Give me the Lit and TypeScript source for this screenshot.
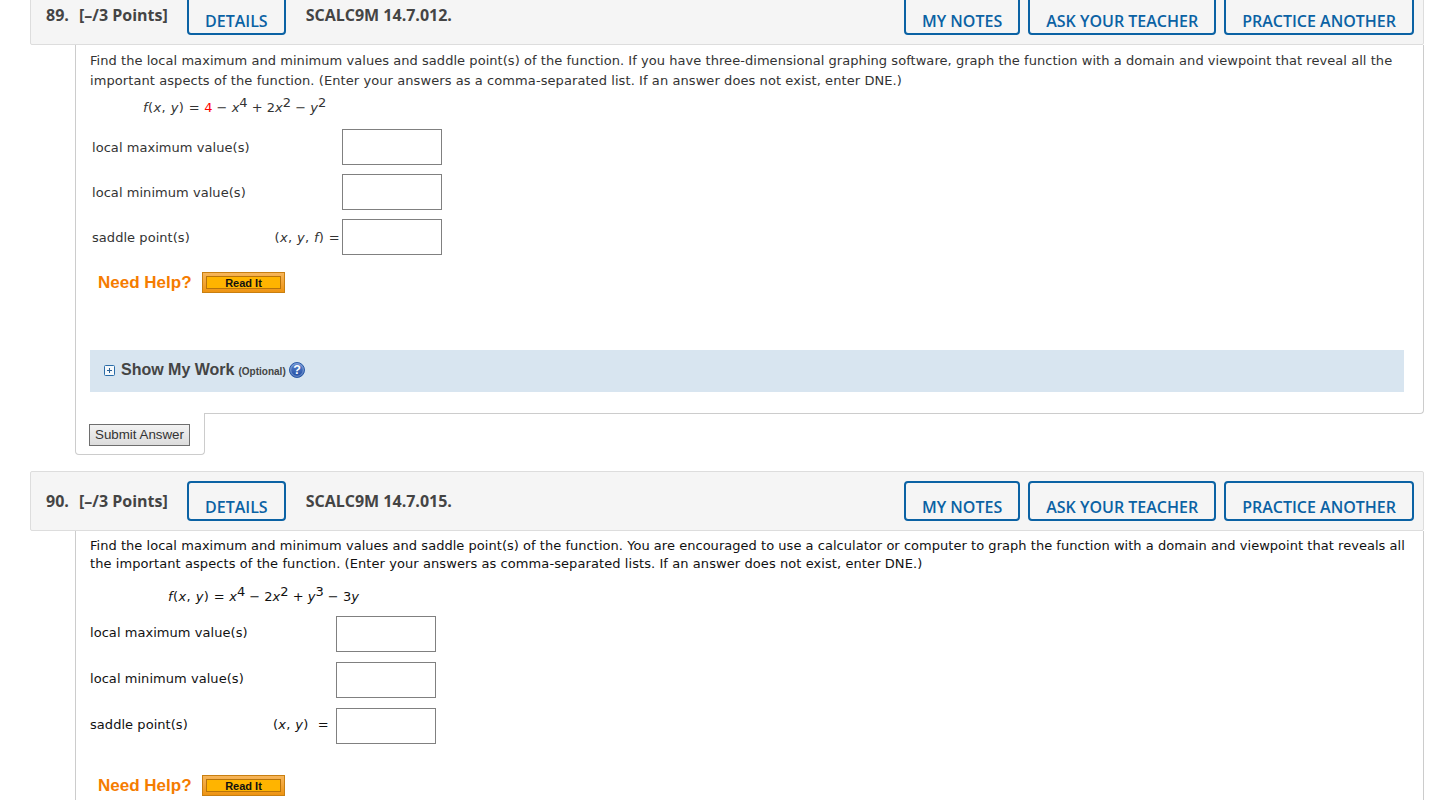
import { LitElement, html, css, TemplateResult } from 'lit';
import { customElement, property } from 'lit/decorators.js';

interface Answer {
  label: string;
  prefix?: TemplateResult;
}

@customElement('wa-question')
export class WaQuestion extends LitElement {
  @property({ type: Number }) num = 0;
  @property({ type: String }) code = '';
  @property({ type: String }) variant = 'first';
  @property({ type: Array }) promptLines: string[] = [];
  @property({ attribute: false }) formula: TemplateResult | null = null;
  @property({ attribute: false }) answers: Answer[] = [];
  @property({ type: Boolean }) showWork = false;

  static styles = css`
    :host {
      display: block;
      font-family: 'DejaVu Sans', Verdana, sans-serif;
      font-size: 13px;
      color: #333;
    }

    .header {
      box-sizing: border-box;
      width: 1394px;
      height: 60px;
      margin-left: 30px;
      padding: 9px 9px 0 15px;
      display: flex;
      align-items: flex-start;
      background: #f5f5f5;
      border: 1px solid #ddd;
      border-radius: 2px;
      font-family: 'Open Sans', sans-serif;
      font-size: 16px;
      font-weight: 700;
      color: #444;
    }

    .num {
      width: 33px;
      padding-top: 10px;
      line-height: 20px;
    }

    .points {
      width: 108px;
      padding-top: 10px;
      line-height: 20px;
    }

    .code {
      flex: 1;
      margin-left: 20px;
      padding-top: 10px;
      line-height: 20px;
    }

    .tabs {
      display: flex;
      gap: 8px;
    }

    .tab {
      box-sizing: border-box;
      height: 40px;
      padding: 14px 16px 0;
      line-height: 20px;
      border: 2px solid #0b62a4;
      border-radius: 4px;
      color: #0b62a4;
      font-weight: 600;
      white-space: nowrap;
    }

    .body {
      box-sizing: border-box;
      width: 1349px;
      margin-left: 75px;
      border-left: 1px solid #ccc;
      border-right: 1px solid #ccc;
      padding-left: 14px;
      letter-spacing: 0.05px;
    }

    .first .body {
      height: 369px;
      padding-top: 6px;
      border-bottom: 1px solid #ccc;
      border-bottom-right-radius: 4px;
    }

    .second .body {
      height: 269px;
      padding-top: 6px;
      color: #111;
    }

    .prompt {
      white-space: nowrap;
    }

    .first .prompt {
      line-height: 20px;
      letter-spacing: 0.05px;
    }

    .second .prompt {
      line-height: 18px;
      letter-spacing: 0.035px;
    }

    .prompt div + div {
      letter-spacing: 0.08px;
    }

    .formula {
      font-size: 13px;
      line-height: 20px;
      letter-spacing: 0;
    }

    .first .formula {
      margin: 7px 0 0 53px;
    }

    .second .formula {
      margin: 14px 0 0 78px;
    }

    .formula sup {
      font-size: 13px;
      line-height: 0;
      vertical-align: super;
    }

    .args {
      letter-spacing: 0.4px;
    }

    .red {
      color: #f00;
    }

    .answers {
      display: grid;
      grid-template-columns: 1fr 100px;
    }

    .first .answers {
      margin: 11px 0 0 2px;
      width: 350px;
      row-gap: 9px;
    }

    .second .answers {
      margin: 9px 0 0;
      width: 346px;
      row-gap: 10px;
    }

    .row {
      display: contents;
    }

    .label {
      display: flex;
      align-items: center;
      justify-content: space-between;
      padding-right: 2px;
    }

    .second .label {
      padding: 0 7px 4px 0;
    }

    .prefix {
      letter-spacing: 0.35px;
    }

    .box {
      box-sizing: border-box;
      width: 100px;
      height: 36px;
      border: 1px solid #808080;
      background: #fff;
    }

    .help {
      display: flex;
      align-items: center;
      margin-left: 8px;
      font-family: 'Liberation Sans', Arial, sans-serif;
      letter-spacing: 0;
    }

    .first .help {
      margin-top: 17px;
    }

    .second .help {
      margin-top: 31px;
    }

    .help-text {
      width: 104px;
      color: #f57c00;
      font-size: 17px;
      font-weight: 700;
      line-height: 21px;
    }

    .read {
      box-sizing: border-box;
      width: 83px;
      height: 21px;
      padding: 3px;
      background: linear-gradient(#f6b55a, #ee9412);
      border: 1px solid #c97f10;
    }

    .read span {
      display: block;
      box-sizing: border-box;
      height: 13px;
      border: 1px solid #b97409;
      background: #ffb400;
      color: #111;
      font-size: 11px;
      font-weight: 700;
      line-height: 12px;
      text-align: center;
    }

    .work {
      box-sizing: border-box;
      width: 1314px;
      height: 42px;
      margin-top: 57px;
      padding: 0 0 2px 14px;
      display: flex;
      align-items: center;
      background: #d8e5f0;
      font-family: 'Liberation Sans', Arial, sans-serif;
      font-weight: 700;
      color: #444;
      letter-spacing: 0;
    }

    .work-title {
      margin-left: 6px;
      font-size: 16px;
    }

    .optional {
      margin: 2px 3px 0 4px;
      font-size: 10px;
    }

    .work svg {
      display: block;
    }

    .submit-tab {
      box-sizing: border-box;
      width: 130px;
      height: 42px;
      margin: -1px 0 0 75px;
      padding: 11px 0 0 13px;
      background: #fff;
      border: 1px solid #ccc;
      border-top: 0;
      border-radius: 0 0 4px 4px;
      position: relative;
    }

    .submit {
      box-sizing: border-box;
      width: 101px;
      height: 22px;
      border: 1px solid #6e6e6e;
      background: linear-gradient(#f2f2f2, #dcdcdc);
      color: #333;
      font-family: 'Liberation Sans', Arial, sans-serif;
      font-size: 13.33px;
      line-height: 20px;
      text-align: center;
    }
  `;

  render() {
    return html`
      <div class=${this.variant}>
        <div class="header">
          <div class="num">${this.num}.</div>
          <div class="points">[–/3 Points]</div>
          <div class="tab">DETAILS</div>
          <div class="code">${this.code}</div>
          <div class="tabs">
            <div class="tab">MY NOTES</div>
            <div class="tab">ASK YOUR TEACHER</div>
            <div class="tab">PRACTICE ANOTHER</div>
          </div>
        </div>
        <div class="body">
          <div class="prompt">
            ${this.promptLines.map((line) => html`<div>${line}</div>`)}
          </div>
          <div class="formula">${this.formula}</div>
          <div class="answers">
            ${this.answers.map(
              (a) => html`
                <div class="row">
                  <div class="label">
                    <span>${a.label}</span>
                    <span class="prefix">${a.prefix ?? ''}</span>
                  </div>
                  <div class="box"></div>
                </div>
              `
            )}
          </div>
          <div class="help">
            <div class="help-text">Need Help?</div>
            <div class="read"><span>Read It</span></div>
          </div>
          ${this.showWork ? this.renderWork() : ''}
        </div>
        ${this.showWork
          ? html`
              <div class="submit-tab">
                <div class="submit">Submit Answer</div>
              </div>
            `
          : ''}
      </div>
    `;
  }

  private renderWork() {
    return html`
      <div class="work">
        <svg width="11" height="11" viewBox="0 0 11 11">
          <rect x="0.5" y="0.5" width="10" height="10" rx="1" fill="#f4f8fb" stroke="#2a6ca8" />
          <path d="M3 5.5h5M5.5 3v5" stroke="#2a5f94" fill="none" />
        </svg>
        <span class="work-title">Show My Work</span>
        <span class="optional">(Optional)</span>
        <svg width="16" height="16" viewBox="0 0 16 16">
          <defs>
            <linearGradient id="q" x1="0" y1="0" x2="0" y2="1">
              <stop offset="0" stop-color="#5f86cf" />
              <stop offset="1" stop-color="#1d4aa0" />
            </linearGradient>
          </defs>
          <circle cx="8" cy="8" r="7.5" fill="url(#q)" stroke="#2c5ca8" />
          <circle cx="8" cy="8" r="6.3" fill="none" stroke="#a9c0e6" stroke-width="0.6" />
          <text x="8" y="12.3" text-anchor="middle" font-size="12.5" font-weight="700" fill="#fff">?</text>
        </svg>
      </div>
    `;
  }
}

@customElement('app-root')
export class AppRoot extends LitElement {
  static styles = css`
    :host {
      display: block;
      height: 800px;
      overflow: hidden;
      background: #fff;
    }

    .page {
      margin-top: -15px;
      display: flex;
      flex-direction: column;
      gap: 16px;
    }
  `;

  render() {
    return html`
      <div class="page">
        <wa-question
          num="89"
          code="SCALC9M 14.7.012."
          variant="first"
          .showWork=${true}
          .promptLines=${[
            'Find the local maximum and minimum values and saddle point(s) of the function. If you have three-dimensional graphing software, graph the function with a domain and viewpoint that reveal all the',
            'important aspects of the function. (Enter your answers as a comma-separated list. If an answer does not exist, enter DNE.)',
          ]}
          .formula=${html`<span class="args"><i>f</i>(<i>x</i>, <i>y</i>) =</span> <span class="red">4</span> − <i>x</i><sup>4</sup> + 2<i>x</i><sup>2</sup> − <i>y</i><sup>2</sup>`}
          .answers=${[
            { label: 'local maximum value(s)' },
            { label: 'local minimum value(s)' },
            { label: 'saddle point(s)', prefix: html`(<i>x</i>, <i>y</i>, <i>f</i>) =` },
          ]}
        ></wa-question>
        <wa-question
          num="90"
          code="SCALC9M 14.7.015."
          variant="second"
          .promptLines=${[
            'Find the local maximum and minimum values and saddle point(s) of the function. You are encouraged to use a calculator or computer to graph the function with a domain and viewpoint that reveals all',
            'the important aspects of the function. (Enter your answers as comma-separated lists. If an answer does not exist, enter DNE.)',
          ]}
          .formula=${html`<span class="args"><i>f</i>(<i>x</i>, <i>y</i>) =</span> <i>x</i><sup>4</sup> − 2<i>x</i><sup>2</sup> + <i>y</i><sup>3</sup> − 3<i>y</i>`}
          .answers=${[
            { label: 'local maximum value(s)' },
            { label: 'local minimum value(s)' },
            { label: 'saddle point(s)', prefix: html`(<i>x</i>, <i>y</i>) &nbsp;=` },
          ]}
        ></wa-question>
      </div>
    `;
  }
}
